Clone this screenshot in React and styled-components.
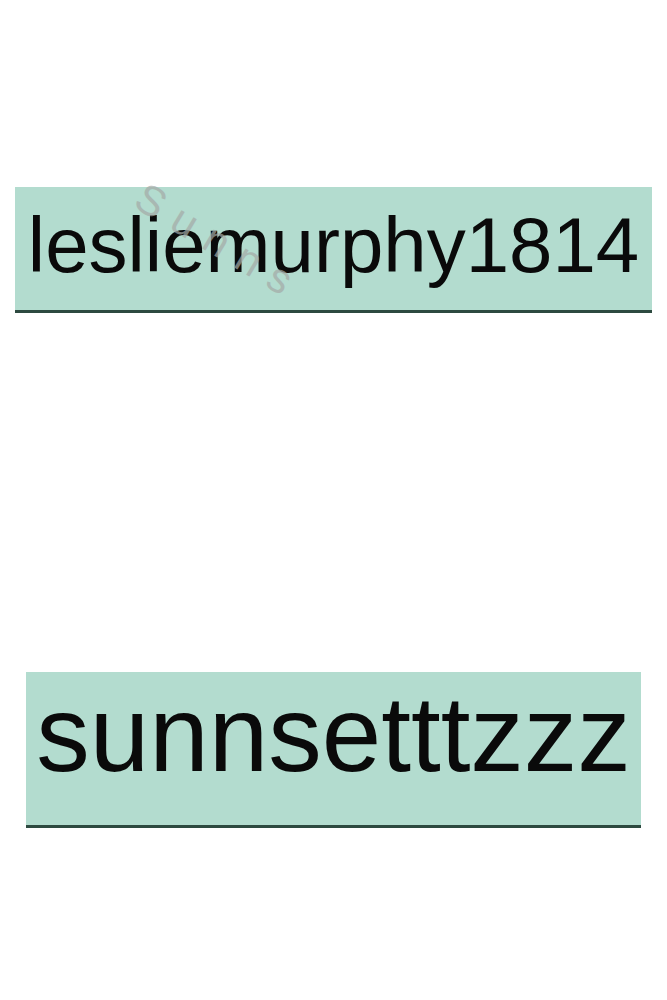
import React from "react";
import styled, { createGlobalStyle } from "styled-components";

const GlobalStyle = createGlobalStyle`
    body {
        margin: 0;
        background: #ffffff;
        font-family: "Liberation Sans", Arial, sans-serif;
    }
`;

const Page = styled.div`
    width: 667px;
    height: 1000px;
    display: flex;
    flex-direction: column;
    padding-top: 187px;
    box-sizing: border-box;
`;

const NameTag = styled.div`
    position: relative;
    box-sizing: border-box;
    width: ${(p) => p.width}px;
    height: ${(p) => p.height}px;
    margin-left: ${(p) => p.left}px;
    margin-top: ${(p) => p.top || 0}px;
    background: #b3dccf;
    border-bottom: 3px solid #2d4a40;
    display: flex;
    align-items: center;
    justify-content: center;
`;

const Handle = styled.span`
    font-size: ${(p) => p.size}px;
    line-height: 1;
    color: #0a0a0a;
    white-space: nowrap;
    position: relative;
    top: ${(p) => p.shift || 0}px;
    z-index: 1;
`;

// faint rotated signature sitting on top of the first tag
const Stamp = styled.span`
    position: absolute;
    left: 124px;
    top: -14px;
    font-size: 42px;
    line-height: 1;
    color: #a4aaa7;
    opacity: 0.7;
    letter-spacing: 14px;
    transform: rotate(31deg);
    transform-origin: 0 50%;
    white-space: nowrap;
    z-index: 2;
`;

function App() {
    return (
        <>
            <GlobalStyle />
            <Page>
                <NameTag width={637} height={126} left={15}>
                    <Stamp>Sunns</Stamp>
                    <Handle size={78} shift={-4}>
                        lesliemurphy1814
                    </Handle>
                </NameTag>
                <NameTag width={615} height={156} left={26} top={359}>
                    <Handle size={107} shift={-14}>
                        sunnsetttzzz
                    </Handle>
                </NameTag>
            </Page>
        </>
    );
}

export default App;
